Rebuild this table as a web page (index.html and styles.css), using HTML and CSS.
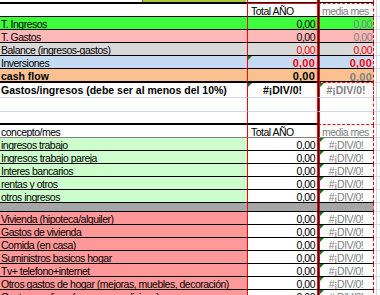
FILE: index.html
```html
<!DOCTYPE html>
<html>
<head>
<meta charset="utf-8">
<link rel="stylesheet" href="styles.css">
</head>
<body>
<div class="sheet">
  <div class="row top"><div class="a"><span class="selbar"></span></div><div class="b"></div><div class="c"></div><div class="d"></div><div class="e"></div></div>
  <div class="row hdr"><div class="a"></div><div class="b l">Total AÑO</div><div class="c l gray">media mes</div><div class="d"></div><div class="e"></div></div>
  <div class="row ting"><div class="a">T. Ingresos</div><div class="b">0,00</div><div class="c gray">0,00</div><div class="d"></div><div class="e"></div></div>
  <div class="row tgas"><div class="a">T. Gastos</div><div class="b">0,00</div><div class="c gray">0,00</div><div class="d"></div><div class="e"></div></div>
  <div class="row bal"><div class="a">Balance (ingresos-gastos)</div><div class="b red">0,00</div><div class="c red">0,00</div><div class="d"></div><div class="e"></div></div>
  <div class="row inv"><div class="a">Inversiones</div><div class="b red num tri">0,00</div><div class="c red num">0,00</div><div class="d"></div><div class="e"></div></div>
  <div class="row cash"><div class="a bd">cash flow</div><div class="b num">0,00</div><div class="c gray num">0,00</div><div class="d"></div><div class="e"></div></div>
  <div class="row ratio"><div class="a bd">Gastos/ingresos (debe ser al menos del 10%)</div><div class="b bd ctr tri">#¡DIV/0!</div><div class="c bd gray ctr tri">#¡DIV/0!</div><div class="d"></div><div class="e"></div></div>
  <div class="row blank1"><div class="a"></div><div class="b"></div><div class="c"></div><div class="d"></div><div class="e"></div></div>
  <div class="row blank2"><div class="a"></div><div class="b"></div><div class="c"></div><div class="d"></div><div class="e"></div></div>
  <div class="row concepto"><div class="a">concepto/mes</div><div class="b l">Total AÑO</div><div class="c l gray">media mes</div><div class="d"></div><div class="e"></div></div>
  <div class="row inc"><div class="a">ingresos trabajo</div><div class="b">0,00</div><div class="c gray ctr tri">#¡DIV/0!</div><div class="d"></div><div class="e"></div></div>
  <div class="row inc"><div class="a">Ingresos trabajo pareja</div><div class="b">0,00</div><div class="c gray ctr tri">#¡DIV/0!</div><div class="d"></div><div class="e"></div></div>
  <div class="row inc"><div class="a">Interes bancarios</div><div class="b">0,00</div><div class="c gray ctr tri">#¡DIV/0!</div><div class="d"></div><div class="e"></div></div>
  <div class="row inc"><div class="a">rentas y otros</div><div class="b">0,00</div><div class="c gray ctr tri">#¡DIV/0!</div><div class="d"></div><div class="e"></div></div>
  <div class="row inc"><div class="a">otros ingresos</div><div class="b">0,00</div><div class="c gray ctr tri">#¡DIV/0!</div><div class="d"></div><div class="e"></div></div>
  <div class="row sep"><div class="a"></div><div class="b"></div><div class="c"></div><div class="d"></div><div class="e"></div></div>
  <div class="row exp"><div class="a">Vivienda (hipoteca/alquiler)</div><div class="b">0,00</div><div class="c gray ctr tri">#¡DIV/0!</div><div class="d"></div><div class="e"></div></div>
  <div class="row exp"><div class="a">Gastos de vivienda</div><div class="b">0,00</div><div class="c gray ctr tri">#¡DIV/0!</div><div class="d"></div><div class="e"></div></div>
  <div class="row exp"><div class="a">Comida (en casa)</div><div class="b">0,00</div><div class="c gray ctr tri">#¡DIV/0!</div><div class="d"></div><div class="e"></div></div>
  <div class="row exp"><div class="a">Suministros basicos hogar</div><div class="b">0,00</div><div class="c gray ctr tri">#¡DIV/0!</div><div class="d"></div><div class="e"></div></div>
  <div class="row exp"><div class="a">Tv+ telefono+internet</div><div class="b">0,00</div><div class="c gray ctr tri">#¡DIV/0!</div><div class="d"></div><div class="e"></div></div>
  <div class="row exp"><div class="a">Otros gastos de hogar (mejoras, muebles, decoración)</div><div class="b">0,00</div><div class="c gray ctr tri">#¡DIV/0!</div><div class="d"></div><div class="e"></div></div>
  <div class="row exp"><div class="a">Gastos medicos (seguros, medicinas)</div><div class="b">0,00</div><div class="c gray ctr tri">#¡DIV/0!</div><div class="d"></div><div class="e"></div></div>
</div>
</body>
</html>
```

FILE: styles.css
```css
html, body {
  margin: 0;
  padding: 0;
  background: #fff;
}
body {
  width: 380px;
  height: 295px;
  overflow: hidden;
  font-family: "Liberation Sans", Arial, sans-serif;
  font-size: 10.5px;
  color: #000;
}
.sheet {
  display: flex;
  flex-direction: column;
}
.row {
  display: grid;
  grid-template-columns: 247px 71px 56px 3px 1fr;
  height: 13px;
  flex: none;
}
.row > div {
  box-sizing: border-box;
  border-bottom: 1px solid #000;
  display: flex;
  align-items: flex-end;
  white-space: nowrap;
  overflow: hidden;
  line-height: 10px;
  letter-spacing: -0.5px;
  position: relative;
}
.a {
  padding-left: 1px;
}
.b {
  border-left: 1px solid #f00;
  border-right: 1px solid #f00;
  justify-content: flex-end;
  padding-right: 2px;
}
.c {
  border-left: 1px solid #000;
  border-right: 1px dashed #f00;
  box-shadow: inset 1px 0 0 #f00;
  justify-content: flex-end;
  padding-right: 1px;
}
.d {
  border-right: 1px solid #d0d7e5;
}
.row > .d, .row > .e {
  border-bottom-color: #d0d7e5;
}
.l {
  justify-content: flex-start;
  padding-left: 3px;
}
.ctr {
  justify-content: center;
  padding-right: 0;
}
.gray { color: #808080; }
.red { color: #f00; }
.row > .bd {
  font-weight: bold;
  font-size: 10.5px;
  letter-spacing: 0;
}
.row > .num {
  font-weight: bold;
  font-size: 11px;
  letter-spacing: 0.2px;
}
.tri::before {
  content: "";
  position: absolute;
  left: 0;
  top: 0;
  border-top: 4px solid #0a7a0a;
  border-right: 4px solid transparent;
}
.c.tri::before { left: 1px; }

/* top strip */
.row.top { height: 3px; }
.row.top > .d, .row.top > .e { border-bottom-color: #fff; }
.selbar {
  display: block;
  margin-left: 141px;
  width: 104px;
  height: 2px;
  align-self: flex-start;
  background: #a8c83a;
  box-shadow: inset 1px 0 0 #4a5a1a;
}

/* header */
.row.hdr { height: 14px; }
.row.hdr > .a { border-top: 1px solid #000; }
.row.hdr > .b { border-top: 1px solid #f00; }
.row.hdr > .c { border-top: 1px dashed #f00; }
.row.hdr > .d, .row.hdr > .e { border-top: 1px solid #fff; }

.ting > .a, .ting > .b, .ting > .c { background: #3dfd3d; }
.tgas > .a, .tgas > .b, .tgas > .c { background: #ffb8b8; }
.bal > .a, .bal > .b, .bal > .c { background: #d9d9d9; }
.inv > .a, .inv > .b, .inv > .c { background: #c5d9f1; }
.cash > .a, .cash > .b, .cash > .c { background: #fac090; }

.row.cash { height: 14px; }
.row.cash > .a, .row.cash > .b { border-bottom-width: 2px; }
.row.cash > .c {
  border-bottom: 1px dashed #f00;
  box-shadow: inset 1px 0 0 #f00, inset 0 -1px 0 #000;
}

.row.ratio { height: 15px; }
.row.ratio > div { border-bottom-color: #d0d7e5; padding-bottom: 2px; }
.row.blank1 { height: 14px; }
.row.blank1 > div { border-bottom-color: #d0d7e5; }
.row.blank2 { height: 13px; }
.row.blank2 > .a, .row.blank2 > .b { border-bottom-width: 2px; }
.row.blank2 > .c { border-bottom: 1px dashed #f00; }
.row.concepto > .a, .row.concepto > .b, .row.concepto > .c { border-bottom-color: #808080; }

.inc > .a { background: #ccffcc; }
.exp > .a { background: #ff9999; }

.row.sep { height: 9px; }
.sep > .a, .sep > .b, .sep > .c { background: #a6a6a6; }
```
